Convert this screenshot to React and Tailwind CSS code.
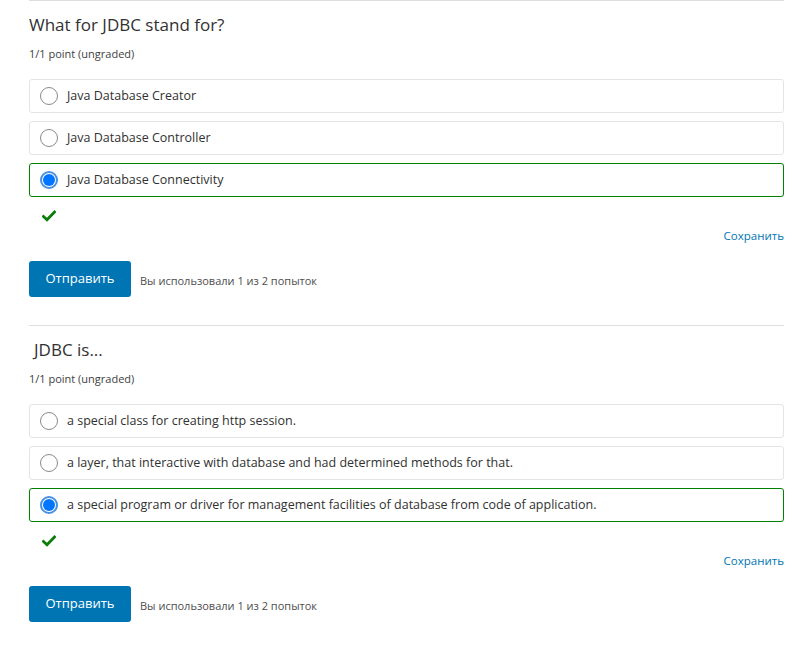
const font = { fontFamily: '"Open Sans", "Noto Sans", sans-serif' }

function Radio({ checked }) {
  if (checked) {
    return (
      <span className="w-[18px] h-[18px] rounded-full border-2 border-[#4a90e2] flex items-center justify-center shrink-0 bg-white">
        <span className="w-[12px] h-[12px] rounded-full bg-[#0075ff]" />
      </span>
    )
  }
  return <span className="w-[18px] h-[18px] rounded-full border border-[#8a8a8a] bg-white shrink-0" />
}

function Check() {
  return (
    <svg width="14" height="12" viewBox="0 0 14 12">
      <path d="M1.5 6.5 L5 9.8 L12.5 2" fill="none" stroke="#0b7d0b" strokeWidth="2.8" strokeLinecap="square" />
    </svg>
  )
}

function Question({ title, options, correct, titleIndent, border }) {
  return (
    <div className={border ? 'border-t border-[#dedede]' : ''}>
      <h3 className={`text-[17px] leading-[24px] text-[#313131] pt-[12px] ${titleIndent}`}>{title}</h3>
      <div className="text-[11px] leading-[16px] text-[#414141] mt-[9px]">1/1 point (ungraded)</div>
      <div className="mt-[17px] flex flex-col gap-[8px]">
        {options.map((o, i) => (
          <div
            key={i}
            className={`h-[34px] rounded-[3px] flex items-center gap-[9px] pl-[10px] text-[12.5px] text-[#313131] ${
              i === correct ? 'border border-[#008100]' : 'border border-[#e4e4e4]'
            }`}
          >
            <Radio checked={i === correct} />
            <span>{o}</span>
          </div>
        ))}
      </div>
      <div className="pl-[13px] mt-[12px] h-[14px] flex items-center">
        <Check />
      </div>
      <div className="flex justify-end mt-[5px]">
        <span className="text-[11.5px] leading-[16px] text-[#0075b4]">Сохранить</span>
      </div>
      <div className="flex items-center gap-[9px] mt-[17px] pb-[28px]">
        <button className="w-[102px] h-[36px] rounded-[3px] bg-[#0075b4] text-white text-[13px]">Отправить</button>
        <span className="text-[11px] text-[#4e4e4e] mt-[5px]">Вы использовали 1 из 2 попыток</span>
      </div>
    </div>
  )
}

export default function App() {
  return (
    <div className="w-[809px] h-[646px] bg-white pl-[29px] pr-[25px] overflow-hidden" style={font}>
      <Question
        border
        title="What for JDBC stand for?"
        titleIndent=""
        correct={2}
        options={['Java Database Creator', 'Java Database Controller', 'Java Database Connectivity']}
      />
      <Question
        border
        title=" JDBC is..."
        titleIndent="pl-[5px]"
        correct={2}
        options={[
          'a special class for creating http session.',
          'a layer, that interactive with database and had determined methods for that.',
          'a special program or driver for management facilities of database from code of application.',
        ]}
      />
    </div>
  )
}
